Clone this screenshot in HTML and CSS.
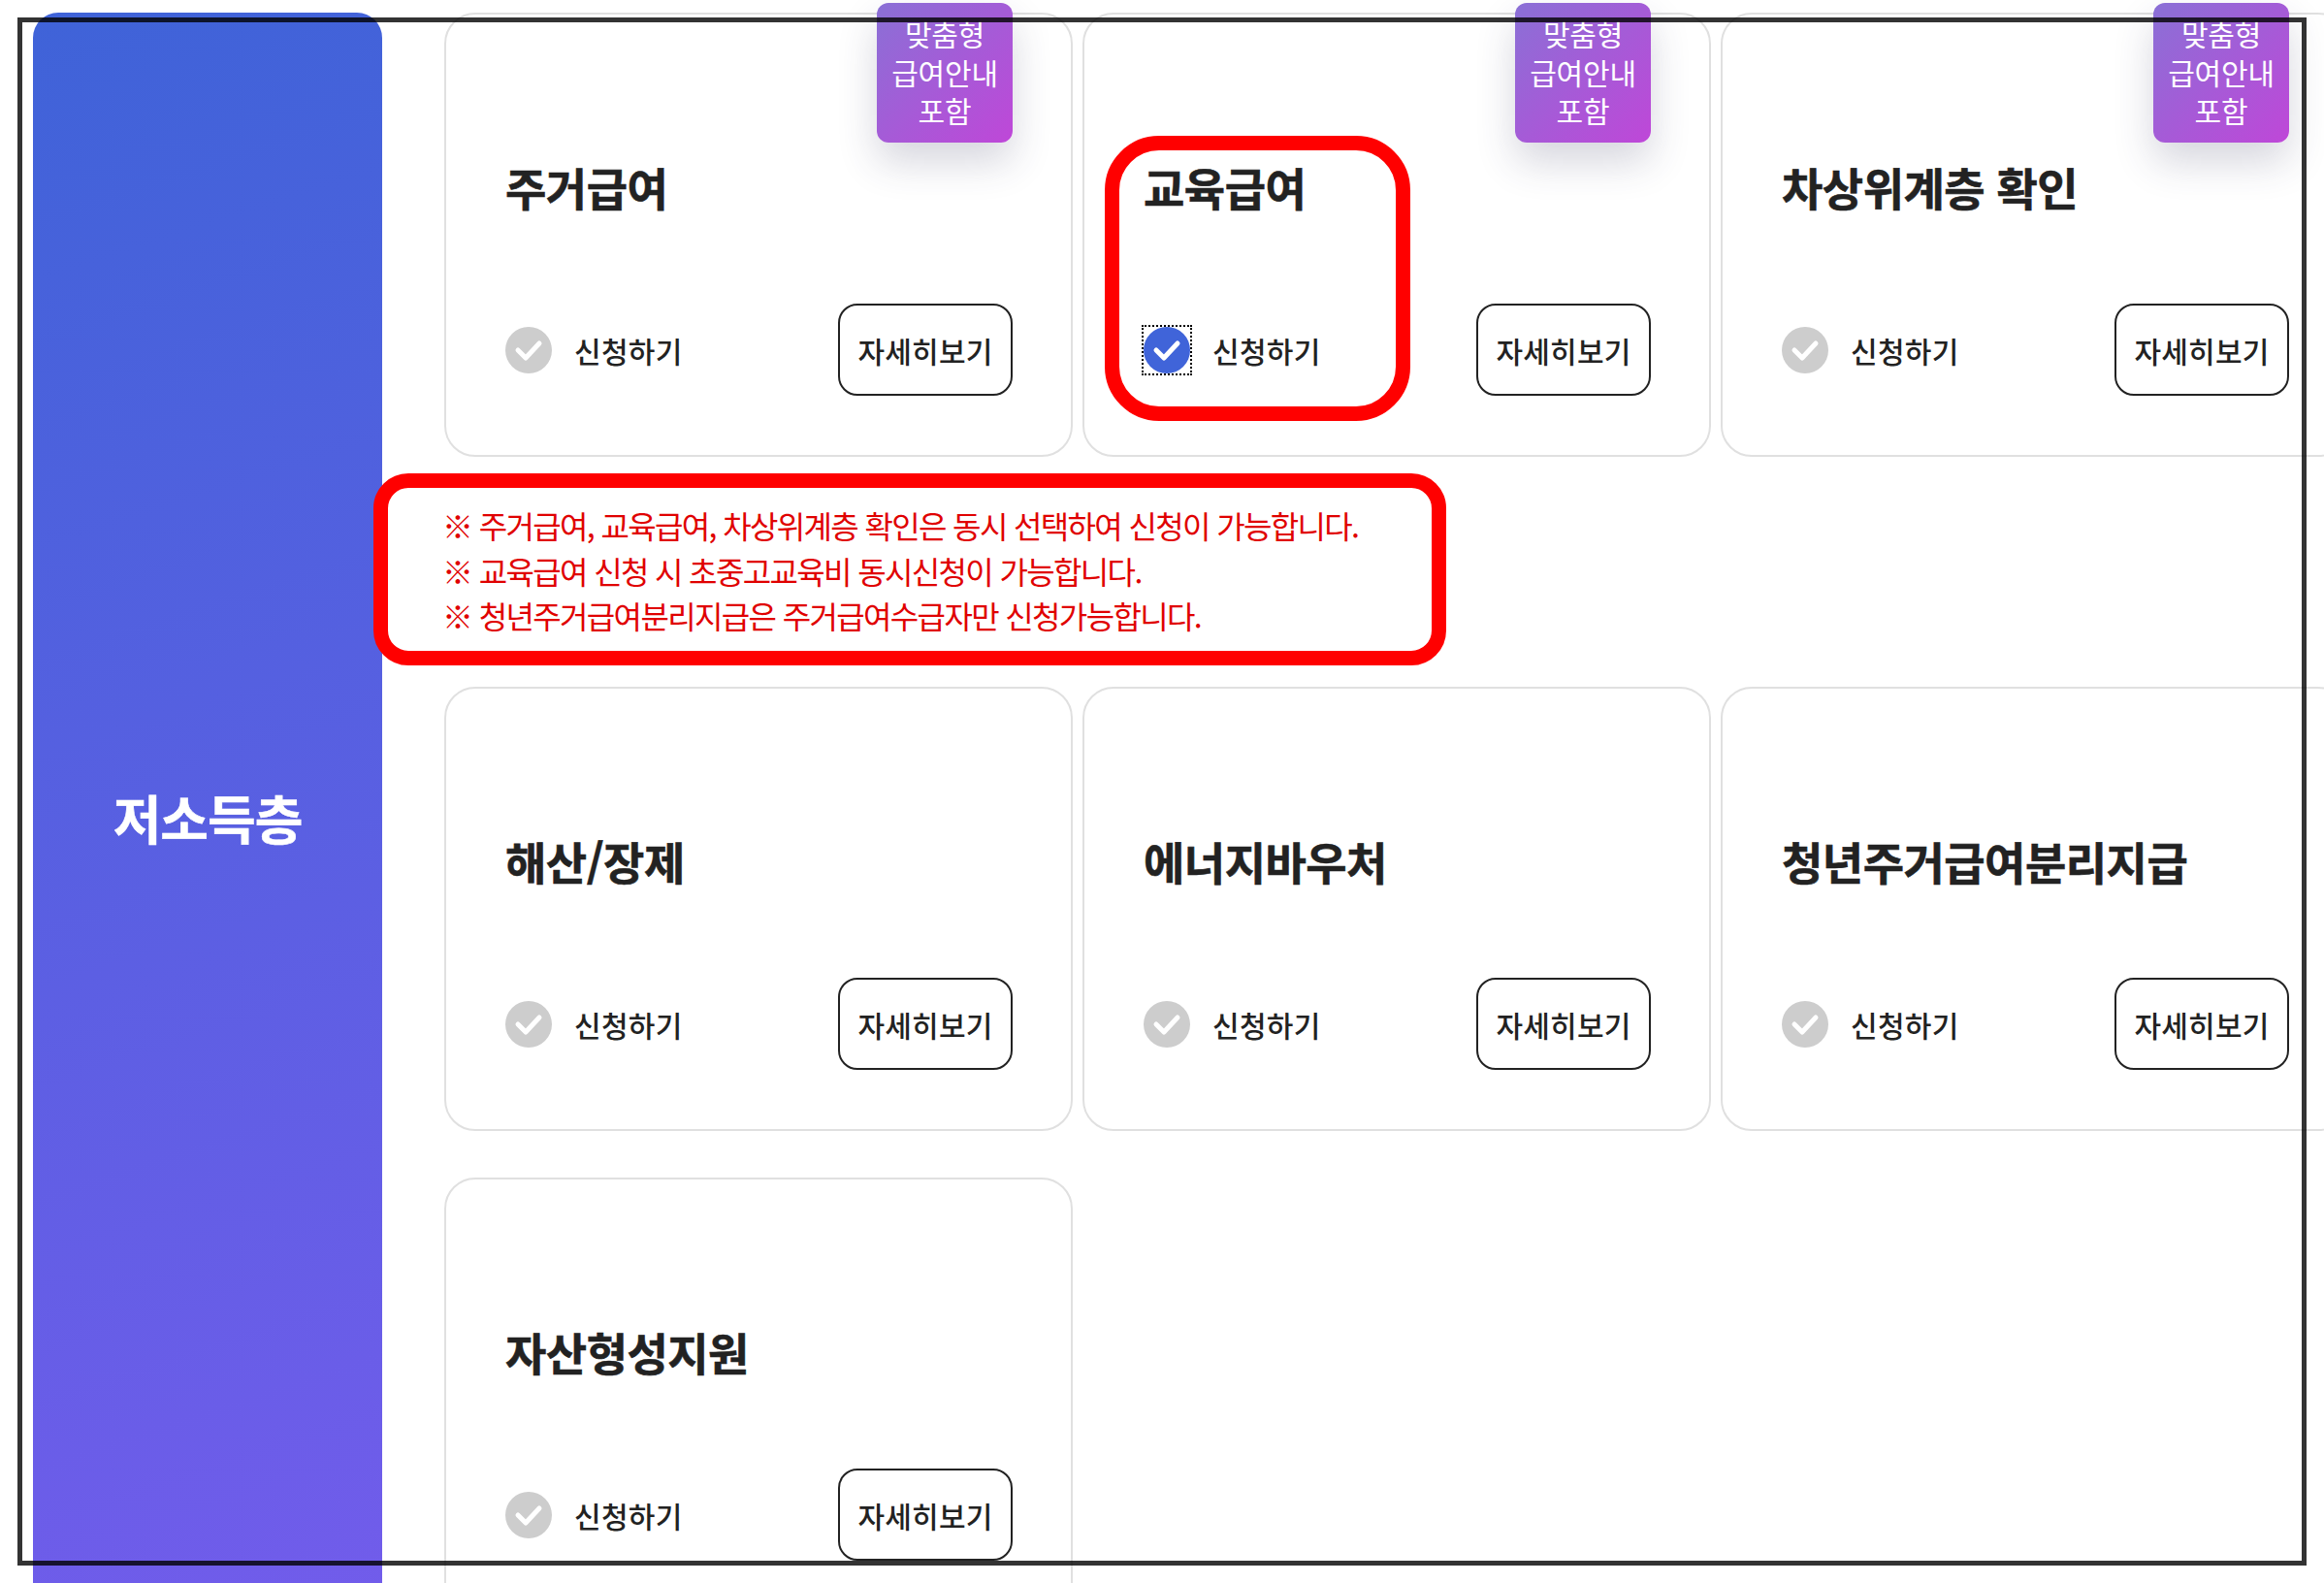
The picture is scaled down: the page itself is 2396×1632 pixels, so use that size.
FILE: index.html
```html
<!DOCTYPE html>
<html lang="ko">
  <head>
    <meta charset="UTF-8" />
    <meta name="viewport" content="width=device-width, initial-scale=1.0" />
    <title>저소득층 신청</title>
    <link rel="stylesheet" href="styles.css">
  </head>
  <body>
    <div class="page">
      <aside class="side"><h2>저소득층</h2></aside>
      <main class="content">
        <section class="cards">
          <article class="card">
            <span class="badge">맞춤형<br>급여안내<br>포함</span>
            <h3>주거급여</h3>
            <div class="card-foot">
              <label class="apply">
                <svg class="check" viewBox="0 0 48 48"><circle cx="24" cy="24" r="24" /><path d="M13 24l8 8 14-15" /></svg>
                신청하기
              </label>
              <button class="more">자세히보기</button>
            </div>
          </article>
          <article class="card">
            <span class="badge">맞춤형<br>급여안내<br>포함</span>
            <h3>교육급여</h3>
            <div class="card-foot">
              <label class="apply">
                <span class="focus-ring">
                  <svg class="check on" viewBox="0 0 48 48"><circle cx="24" cy="24" r="24" /><path d="M13 24l8 8 14-15" /></svg>
                </span>
                신청하기
              </label>
              <button class="more">자세히보기</button>
            </div>
          </article>
          <article class="card">
            <span class="badge">맞춤형<br>급여안내<br>포함</span>
            <h3>차상위계층 확인</h3>
            <div class="card-foot">
              <label class="apply">
                <svg class="check" viewBox="0 0 48 48"><circle cx="24" cy="24" r="24" /><path d="M13 24l8 8 14-15" /></svg>
                신청하기
              </label>
              <button class="more">자세히보기</button>
            </div>
          </article>
        </section>

        <div class="notes">
          <p>※ 주거급여, 교육급여, 차상위계층 확인은 동시 선택하여 신청이 가능합니다.</p>
          <p>※ 교육급여 신청 시 초중고교육비 동시신청이 가능합니다.</p>
          <p>※ 청년주거급여분리지급은 주거급여수급자만 신청가능합니다.</p>
        </div>

        <section class="cards">
          <article class="card">
            <h3>해산/장제</h3>
            <div class="card-foot">
              <label class="apply">
                <svg class="check" viewBox="0 0 48 48"><circle cx="24" cy="24" r="24" /><path d="M13 24l8 8 14-15" /></svg>
                신청하기
              </label>
              <button class="more">자세히보기</button>
            </div>
          </article>
          <article class="card">
            <h3>에너지바우처</h3>
            <div class="card-foot">
              <label class="apply">
                <svg class="check" viewBox="0 0 48 48"><circle cx="24" cy="24" r="24" /><path d="M13 24l8 8 14-15" /></svg>
                신청하기
              </label>
              <button class="more">자세히보기</button>
            </div>
          </article>
          <article class="card">
            <h3>청년주거급여분리지급</h3>
            <div class="card-foot">
              <label class="apply">
                <svg class="check" viewBox="0 0 48 48"><circle cx="24" cy="24" r="24" /><path d="M13 24l8 8 14-15" /></svg>
                신청하기
              </label>
              <button class="more">자세히보기</button>
            </div>
          </article>
          <article class="card">
            <h3>자산형성지원</h3>
            <div class="card-foot">
              <label class="apply">
                <svg class="check" viewBox="0 0 48 48"><circle cx="24" cy="24" r="24" /><path d="M13 24l8 8 14-15" /></svg>
                신청하기
              </label>
              <button class="more">자세히보기</button>
            </div>
          </article>
        </section>
      </main>
    </div>

    <!-- annotation marks drawn over the page -->
    <div class="mark mark-title"></div>
    <div class="mark mark-note"></div>
    <div class="frame"></div>
  </body>
</html>
```

FILE: styles.css
```css
* {
  margin: 0;
  padding: 0;
  box-sizing: border-box;
  font-family: "Noto Sans CJK KR", "Noto Sans", sans-serif;
}
html,
body {
  height: 100%;
  overflow: hidden;
  background: #fff;
}
.page {
  display: flex;
  align-items: stretch;
  gap: 64px;
  width: 2500px;
  padding: 13px 0 0 34px;
}
.side {
  flex: 0 0 360px;
  display: flex;
  align-items: center;
  justify-content: center;
  border-radius: 26px 26px 0 0;
  background: linear-gradient(162deg, #3f63d8, #725ceb);
}
.side h2 {
  color: #fff;
  font-size: 54px;
  font-weight: 700;
  letter-spacing: -1px;
  -webkit-text-stroke: 0.5px #fff;
}
.cards {
  display: grid;
  grid-template-columns: repeat(3, 648px);
  column-gap: 10px;
  row-gap: 48px;
}
.card {
  position: relative;
  display: flex;
  flex-direction: column;
  justify-content: space-between;
  height: 458px;
  padding: 145px 60px 61px 61px;
  border: 2px solid #e0e0e0;
  border-radius: 32px;
  background: #fff;
}
.card h3 {
  color: #222;
  font-size: 46px;
  line-height: 64px;
  font-weight: 700;
  letter-spacing: -0.5px;
  -webkit-text-stroke: 0.6px #222;
}
.badge {
  position: absolute;
  top: -12px;
  right: 60px;
  width: 140px;
  height: 144px;
  padding-top: 12px;
  border-radius: 12px;
  color: #fff;
  font-size: 30px;
  line-height: 39.5px;
  letter-spacing: -0.2px;
  text-align: center;
  background: linear-gradient(135deg, #8a70d6, #bf47d8);
  box-shadow: 0 20px 40px rgba(50, 50, 90, 0.2);
}
.card-foot {
  display: flex;
  align-items: center;
  justify-content: space-between;
}
.apply {
  display: flex;
  align-items: center;
  gap: 23px;
  color: #222;
  font-size: 30px;
  font-weight: 500;
  letter-spacing: 0.3px;
}
.check {
  display: block;
  width: 48px;
  height: 48px;
  filter: blur(0.7px);
}
.check circle {
  fill: #cdcdcd;
}
.check path {
  fill: none;
  stroke: #fff;
  stroke-width: 5;
  stroke-linecap: round;
  stroke-linejoin: round;
}
.check.on circle {
  fill: #4064d9;
}
.focus-ring {
  display: block;
  margin: -2px;
  padding: 2px;
  outline: 2px dotted #000;
  outline-offset: -2px;
}
.more {
  width: 180px;
  height: 95px;
  border: 2px solid #222;
  border-radius: 20px;
  color: #222;
  font-size: 30px;
  font-weight: 500;
  letter-spacing: 0.2px;
  background: #fff;
}
.notes {
  margin-left: -2px;
  padding: 47px 0 50px;
  color: #e00000;
  font-size: 32px;
  line-height: 46.7px;
  letter-spacing: -1.65px;
}
.mark {
  position: absolute;
  border: 15px solid #ff0000;
}
.mark-title {
  left: 1139px;
  top: 140px;
  width: 315px;
  height: 294px;
  border-radius: 56px;
}
.mark-note {
  left: 385px;
  top: 488px;
  width: 1106px;
  height: 198px;
  border-radius: 36px;
}
.frame {
  position: absolute;
  left: 18px;
  top: 18px;
  width: 2360px;
  height: 1596px;
  border: 5px solid rgba(0, 0, 0, 0.8);
}
```
